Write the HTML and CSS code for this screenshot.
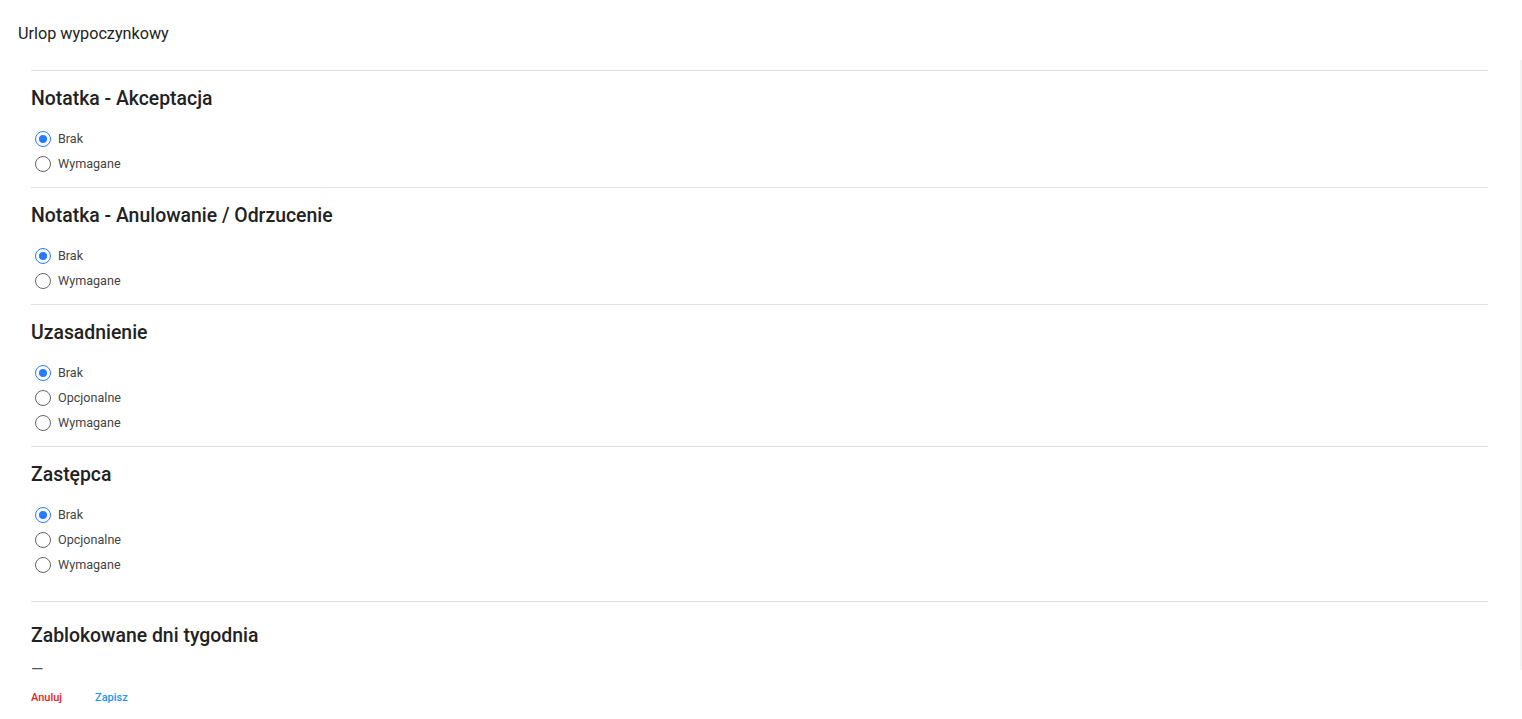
FILE: index.html
```html
<!DOCTYPE html>
<html lang="pl">

<head>
  <meta charset="UTF-8">
  <meta name="viewport" content="width=device-width, initial-scale=1.0">
  <title>Urlop wypoczynkowy</title>
  <link rel="stylesheet" href="styles.css">
</head>

<body>
  <div class="dialog">
    <h1 class="dialog-title">Urlop wypoczynkowy</h1>

    <div class="dialog-content">
      <section class="section">
        <h2>Notatka - Akceptacja</h2>
        <label class="option"><input type="radio" name="note-accept" checked><span>Brak</span></label>
        <label class="option"><input type="radio" name="note-accept"><span>Wymagane</span></label>
      </section>

      <section class="section">
        <h2>Notatka - Anulowanie / Odrzucenie</h2>
        <label class="option"><input type="radio" name="note-reject" checked><span>Brak</span></label>
        <label class="option"><input type="radio" name="note-reject"><span>Wymagane</span></label>
      </section>

      <section class="section">
        <h2>Uzasadnienie</h2>
        <label class="option"><input type="radio" name="reason" checked><span>Brak</span></label>
        <label class="option"><input type="radio" name="reason"><span>Opcjonalne</span></label>
        <label class="option"><input type="radio" name="reason"><span>Wymagane</span></label>
      </section>

      <section class="section section-last">
        <h2>Zastępca</h2>
        <label class="option"><input type="radio" name="deputy" checked><span>Brak</span></label>
        <label class="option"><input type="radio" name="deputy"><span>Opcjonalne</span></label>
        <label class="option"><input type="radio" name="deputy"><span>Wymagane</span></label>
      </section>

      <section class="section section-days">
        <h2>Zablokowane dni tygodnia</h2>
        <p class="empty">—</p>
      </section>
    </div>

    <div class="dialog-actions">
      <button class="btn btn-cancel">Anuluj</button>
      <button class="btn btn-save">Zapisz</button>
    </div>
  </div>
</body>

</html>
```

FILE: styles.css
```css
* {
  margin: 0;
  padding: 0;
  box-sizing: border-box;
}

:root {
  --text: #222222;
  --label: #444444;
  --divider: #e0e0e0;
  --blue: #2979ff;
  --red: #e81e1e;
  --link: #2196f3;

  font-family: Roboto, "Noto Sans", sans-serif;
}

body {
  background: #ffffff;
  color: var(--text);
}

.dialog {
  position: relative;
  min-height: 719px;
}

/* scrollbar track on the right edge */
.dialog::after {
  content: "";
  position: absolute;
  top: 60px;
  right: 0;
  width: 2px;
  height: 610px;
  background: #f4f4f4;
}

.dialog-title {
  font-size: 16.2px;
  font-weight: 400;
  line-height: 20px;
  padding: 24px 18px 0;
}

.dialog-content {
  padding: 26px 34px 0 31px;
}

.section {
  border-top: 1px solid var(--divider);
  padding: 16px 0 11px;
}

.section h2 {
  font-size: 19.4px;
  font-weight: 500;
  line-height: 24px;
  margin-bottom: 15px;
}

.section-last {
  padding-bottom: 24px;
}

.section-days {
  padding: 22px 0 0;
}

.section-days h2 {
  margin-bottom: 12px;
}

.option {
  display: flex;
  align-items: center;
  height: 25px;
  gap: 7px;
  padding-left: 4px;
  font-size: 12.6px;
  color: var(--label);
  cursor: pointer;
}

.option input {
  appearance: none;
  width: 16px;
  height: 16px;
  border: 1.5px solid #666666;
  border-radius: 50%;
  display: grid;
  place-items: center;
  margin: 0;
}

.option input:checked {
  border-color: var(--blue);
}

.option input:checked::before {
  content: "";
  width: 8px;
  height: 8px;
  border-radius: 50%;
  background: var(--blue);
}

.empty {
  font-size: 16px;
  line-height: 20px;
  color: #555555;
}

.dialog-actions {
  display: flex;
  gap: 10px;
  padding: 7px 31px 0;
}

.btn {
  background: none;
  border: none;
  font-family: inherit;
  font-size: 11px;
  font-weight: 500;
  padding: 4px 0;
  min-width: 54px;
  text-align: left;
  cursor: pointer;
}

.btn-cancel {
  color: var(--red);
}

.btn-save {
  color: var(--link);
}
```
